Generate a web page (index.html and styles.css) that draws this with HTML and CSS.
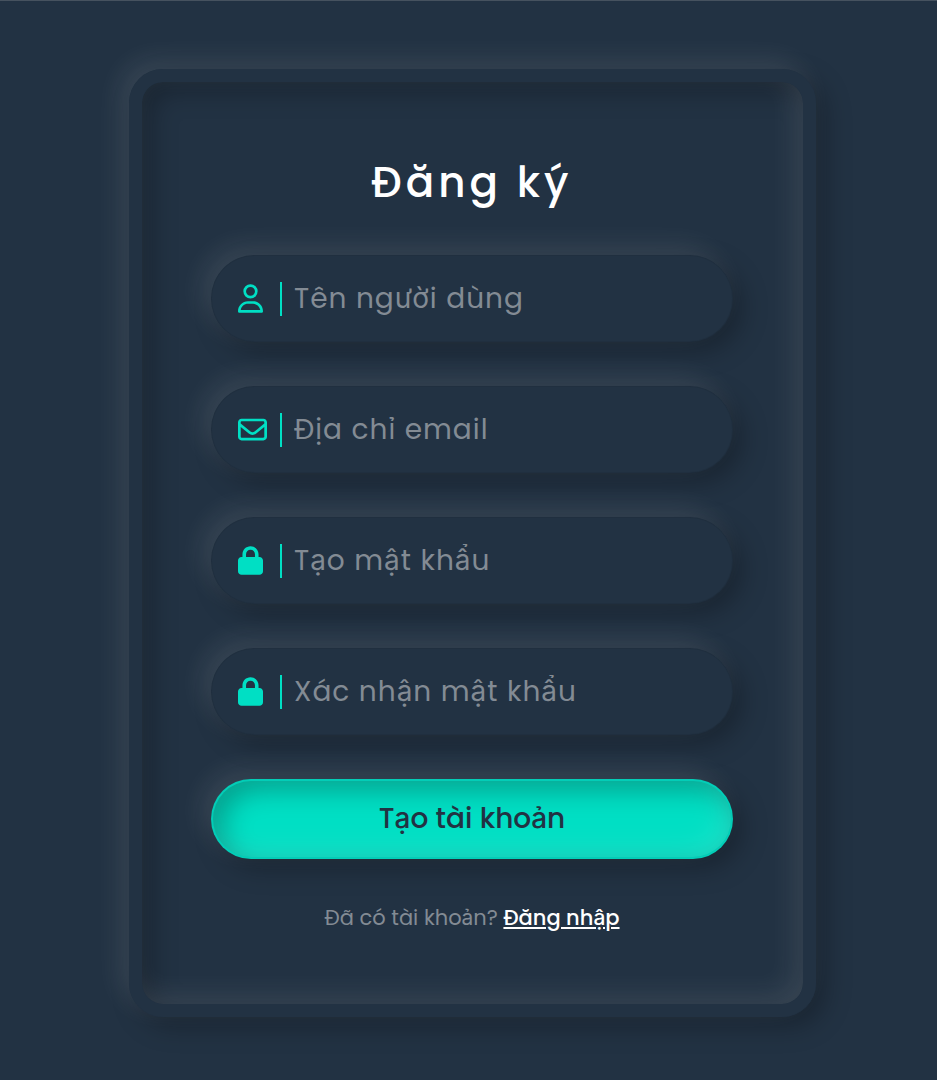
FILE: index.html
```html
<!DOCTYPE html>
<html lang="vi">
<head>
<meta charset="utf-8">
<meta name="viewport" content="width=device-width, initial-scale=1">
<title>Đăng ký</title>
<link rel="stylesheet" href="styles.css">
</head>
<body class="page">
<main class="card">
  <form class="form">
    <h1 class="title">Đăng ký</h1>
    <label class="field" for="username">
      <svg class="icon" viewBox="0 0 448 512" aria-hidden="true"><path d="M304 128a80 80 0 1 0-160 0 80 80 0 1 0 160 0zM96 128a128 128 0 1 1 256 0 128 128 0 1 1-256 0zM49.300 464h349.400c-8.900-63.300-63.300-112-129-112h-91.400c-65.700 0-120.100 48.700-129 112zM0 482.300C0 383.800 79.800 304 178.300 304h91.400C368.200 304 448 383.800 448 482.300c0 16.400-13.300 29.700-29.700 29.700H29.700C13.300 512 0 498.700 0 482.300z"/></svg>
      <input class="input" id="username" type="text" aria-label="Tên người dùng" placeholder="Tên người dùng">
    </label>
    <label class="field" for="email">
      <svg class="icon icon-wide" viewBox="0 0 512 512" aria-hidden="true"><path d="M64 112c-8.800 0-16 7.200-16 16v22.100l172.500 141.600c20.700 17 50.400 17 71.100 0L464 150.100V128c0-8.800-7.200-16-16-16H64zM48 212.200V384c0 8.800 7.200 16 16 16h384c8.800 0 16-7.200 16-16V212.200L322 328.800c-38.400 31.500-93.700 31.500-132 0L48 212.200zM0 128c0-35.300 28.700-64 64-64h384c35.300 0 64 28.700 64 64v256c0 35.300-28.700 64-64 64H64c-35.300 0-64-28.700-64-64V128z"/></svg>
      <input class="input" id="email" type="email" aria-label="Địa chỉ email" placeholder="Địa chỉ email">
    </label>
    <label class="field" for="password">
      <svg class="icon" viewBox="0 0 448 512" aria-hidden="true"><path d="M144 144v48h160v-48c0-44.200-35.800-80-80-80s-80 35.800-80 80zM80 192v-48C80 64.500 144.500 0 224 0s144 64.500 144 144v48h16c35.300 0 64 28.700 64 64v192c0 35.300-28.700 64-64 64H64c-35.300 0-64-28.700-64-64V256c0-35.300 28.700-64 64-64h16z"/></svg>
      <input class="input" id="password" type="password" aria-label="Tạo mật khẩu" placeholder="Tạo mật khẩu">
    </label>
    <label class="field" for="confirm">
      <svg class="icon" viewBox="0 0 448 512" aria-hidden="true"><path d="M144 144v48h160v-48c0-44.200-35.800-80-80-80s-80 35.800-80 80zM80 192v-48C80 64.500 144.500 0 224 0s144 64.500 144 144v48h16c35.300 0 64 28.700 64 64v192c0 35.300-28.700 64-64 64H64c-35.300 0-64-28.700-64-64V256c0-35.300 28.700-64 64-64h16z"/></svg>
      <input class="input" id="confirm" type="password" aria-label="Xác nhận mật khẩu" placeholder="Xác nhận mật khẩu">
    </label>
    <button class="submit" type="submit">Tạo tài khoản</button>
    <p class="note">Đã có tài khoản? <a class="link" href="#">Đăng nhập</a></p>
  </form>
</main>
</body>
</html>
```
FILE: styles.css
```css
* {
  box-sizing: border-box;
}

.page {
  --bg: #223243;
  --accent: #00dfc4;
  --raised: -9px -9px 27px rgba(255, 255, 255, 0.1), 9px 9px 27px rgba(0, 0, 0, 0.28);
  --sunken: inset -9px -9px 27px rgba(255, 255, 255, 0.1), inset 9px 9px 27px rgba(0, 0, 0, 0.28);
  margin: 0;
  min-height: 100vh;
  display: flex;
  justify-content: center;
  align-items: flex-start;
  padding: 68px 20px 62px 28px;
  border-top: 1px solid #46525f;
  background: var(--bg);
  color: #fff;
  font-family: Poppins, Inter, "Noto Sans", sans-serif;
}

.card {
  width: 100%;
  max-width: 687px;
  padding: 72px 70px 71px 69px;
  border: 13px solid var(--bg);
  border-radius: 34px;
  box-shadow: var(--raised), var(--sunken);
}

.form {
  display: flex;
  flex-direction: column;
  gap: 44px;
}

.title {
  margin: 0;
  font-size: 42px;
  line-height: 57px;
  font-weight: 500;
  letter-spacing: 4px;
  text-align: center;
}

.field {
  display: flex;
  align-items: center;
  height: 87px;
  padding: 0 26px;
  border: 1px solid rgba(0, 0, 0, 0.06);
  border-radius: 44px;
  box-shadow: var(--raised);
}

.icon {
  flex: none;
  width: 25px;
  height: 29px;
  margin-right: 17px;
  fill: var(--accent);
}

.icon-wide {
  width: 29px;
  margin-right: 13px;
}

.input {
  flex: 1;
  min-width: 0;
  height: 34px;
  padding: 0 0 0 12px;
  border: 0;
  border-left: 2px solid var(--accent);
  outline: 0;
  background: transparent;
  color: #fff;
  font-family: inherit;
  font-size: 28px;
  letter-spacing: 1px;
}

.input::placeholder {
  color: #838b94;
  opacity: 1;
}

.submit {
  height: 80px;
  border: 2px solid rgba(34, 50, 67, 0.1);
  border-radius: 40px;
  background: var(--accent);
  box-shadow: var(--raised), var(--sunken);
  color: var(--bg);
  font-family: inherit;
  font-size: 28px;
  font-weight: 500;
}

.note {
  margin: 0;
  font-size: 21px;
  line-height: 30px;
  text-align: center;
  color: #838b94;
}

.link {
  color: #fff;
  font-weight: 500;
}
```
